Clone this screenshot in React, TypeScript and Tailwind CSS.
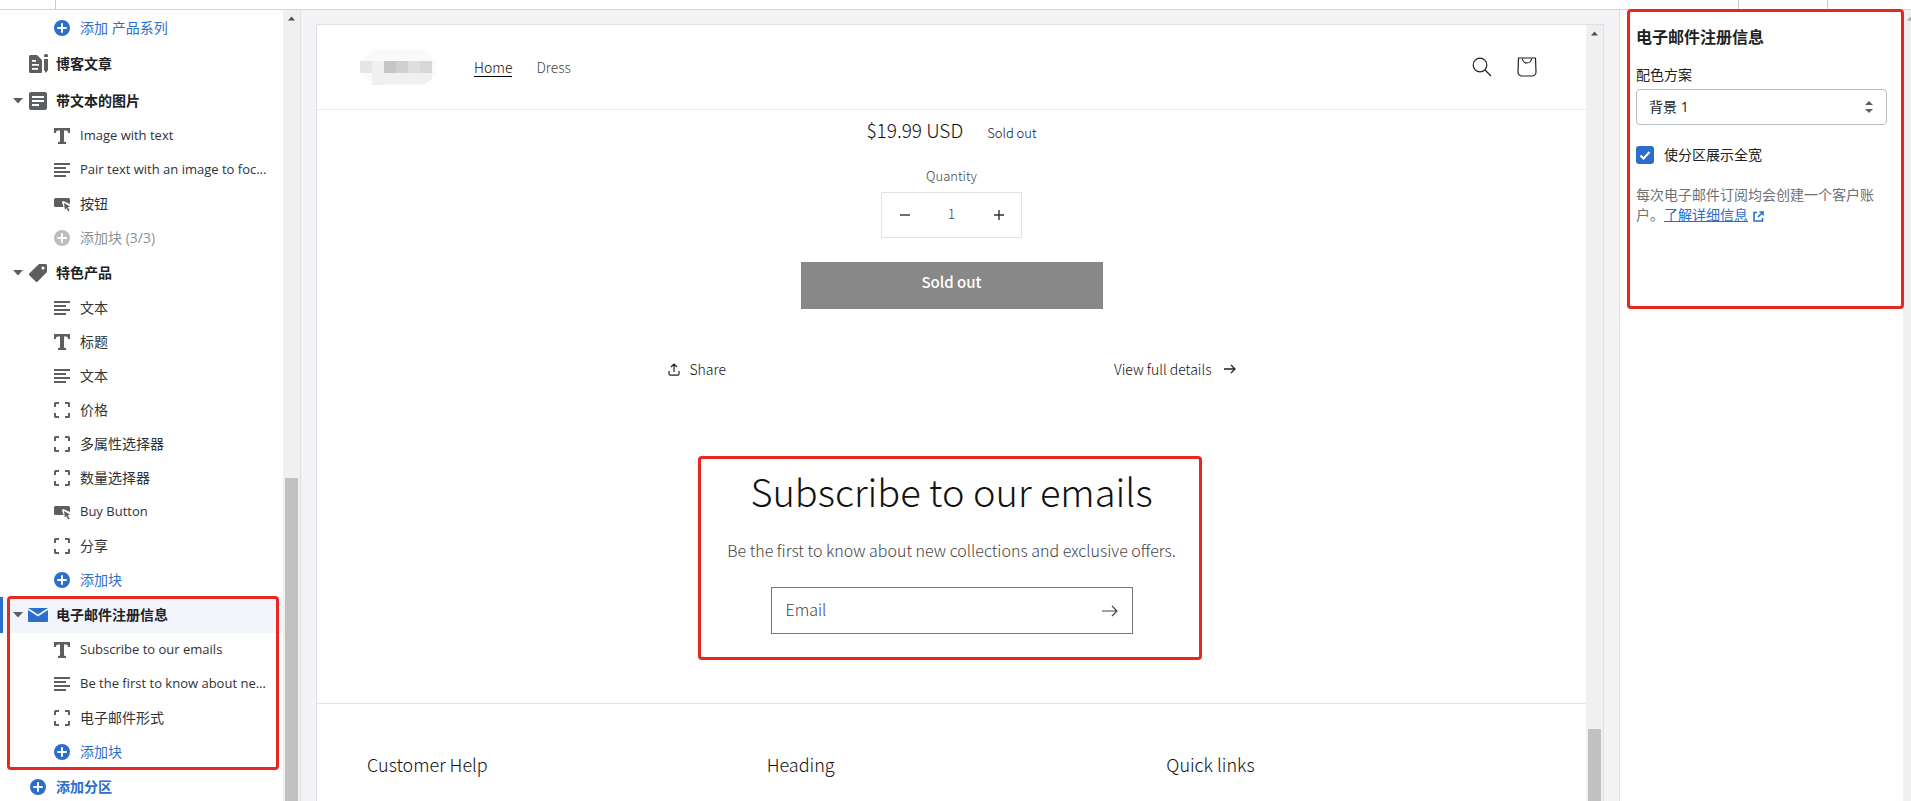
import React from 'react';

type IconName = 'heading' | 'text' | 'button' | 'block';

interface Block {
  icon: IconName;
  label: string;
  latin?: boolean;
}

const imageBlocks: Block[] = [
  { icon: 'heading', label: 'Image with text', latin: true },
  { icon: 'text', label: 'Pair text with an image to foc...', latin: true },
  { icon: 'button', label: '按钮' },
];

const productBlocks: Block[] = [
  { icon: 'text', label: '文本' },
  { icon: 'heading', label: '标题' },
  { icon: 'text', label: '文本' },
  { icon: 'block', label: '价格' },
  { icon: 'block', label: '多属性选择器' },
  { icon: 'block', label: '数量选择器' },
  { icon: 'button', label: 'Buy Button', latin: true },
  { icon: 'block', label: '分享' },
];

const emailBlocks: Block[] = [
  { icon: 'heading', label: 'Subscribe to our emails', latin: true },
  { icon: 'text', label: 'Be the first to know about ne...', latin: true },
  { icon: 'block', label: '电子邮件形式' },
];

const BlockIcon = ({ name }: { name: IconName }) => (
  <svg viewBox="0 0 16 16" className="size-4 shrink-0 fill-[#5c5f62]" aria-hidden="true">
    {name === 'heading' && <path d="M0 0h16v5h-2c0-1.800-.7-2.500-2.200-2.500H10V12.500c0 1 .5 1.500 2 1.500v2H4v-2c1.500 0 2-.5 2-1.500V2.500H4.200C2.700 2.500 2 3.200 2 5H0z" />}
    {name === 'text' && <path d="M0 1h16v2H0zM0 5h12v2H0zM0 9h16v2H0zM0 13h12v2H0z" />}
    {name === 'button' && (
      <path d="M1.500 2h13A1.500 1.500 0 0 1 16 3.500V8L9.800 5.200a1.200 1.200 0 0 0-1.600 1.500L9.600 11H1.500A1.500 1.500 0 0 1 0 9.500v-6A1.500 1.500 0 0 1 1.500 2zM10 7l6 3.600-2.300.7 2 3.300-1.400.9-2-3.400-1.500 1.700z" />
    )}
    {name === 'block' && (
      <path d="M1.500 0H5v2H2v3H0V1.500A1.500 1.500 0 0 1 1.500 0zM11 0h3.500A1.500 1.500 0 0 1 16 1.500V5h-2V2h-3zM0 11h2v3h3v2H1.500A1.500 1.500 0 0 1 0 14.500zM14 11h2v3.500a1.500 1.500 0 0 1-1.500 1.500H11v-2h3z" />
    )}
  </svg>
);

const PlusIcon = ({ className }: { className: string }) => (
  <svg viewBox="0 0 16 16" className={className} aria-hidden="true">
    <circle cx="8" cy="8" r="8" fill="currentColor" />
    <path d="M8 4v8M4 8h8" stroke="#fff" strokeWidth="2" strokeLinecap="round" />
  </svg>
);

const BlockRow = ({ block }: { block: Block }) => (
  <button className="flex h-[34px] w-full items-center gap-2.5 pl-[54px] text-left text-[#303336]">
    <BlockIcon name={block.icon} />
    <span className={block.latin ? 'whitespace-nowrap text-[13px]' : 'whitespace-nowrap text-sm'}>{block.label}</span>
  </button>
);

const AddRow = ({ label, disabled = false }: { label: string; disabled?: boolean }) => (
  <button
    disabled={disabled}
    className="flex h-[34px] w-full items-center gap-2.5 pl-[54px] text-left text-sm text-[#2c6ecb] disabled:text-[#8c9196]"
  >
    <PlusIcon className={disabled ? 'size-4 text-[#babec3]' : 'size-4 text-[#2c6ecb]'} />
    {label}
  </button>
);

const SectionRow = ({ label, children }: { label: string; children: React.ReactNode }) => (
  <button className="flex h-9 w-full items-center pl-[13px] text-left text-sm font-bold text-[#202223]">
    <svg viewBox="0 0 10 6" className="mr-1.5 h-1.5 w-2.5 fill-[#5c5f62]" aria-hidden="true">
      <path d="M0 0h10L5 5.500z" />
    </svg>
    {children}
    <span className="ml-[9px]">{label}</span>
  </button>
);

const Scrollbar = ({ thumb }: { thumb: string }) => (
  <div className="flex w-[17px] shrink-0 flex-col items-center bg-[#f0f0f0]" aria-hidden="true">
    <svg viewBox="0 0 17 17" className="size-[17px] shrink-0 fill-[#505050]">
      <path d="M5 10.500h7L8.500 6.500z" />
    </svg>
    <div className={thumb} />
  </div>
);

const Sidebar = () => (
  <aside className="flex w-[301px] shrink-0 border-r border-[#dfe0e2] bg-white">
    <nav className="min-w-0 flex-1 overflow-hidden pt-px">
      <AddRow label="添加 产品系列" />
      <button className="flex h-[38px] w-full items-center pl-[29px] text-left text-sm font-bold text-[#202223]">
        <svg viewBox="0 0 20 20" className="size-5 fill-[#5c5f62]" aria-hidden="true">
          <path d="M1.500 1H8l5 5v12a1 1 0 0 1-1 1H1.500A1.500 1.500 0 0 1 0 17.500v-15A1.500 1.500 0 0 1 1.500 1zM3 6v1.700h4V6zM3 10v1.700h7V10zM3 14v1.700h6V14z" fillRule="evenodd" />
          <path d="M15 3V1.500A1.500 1.500 0 0 1 16.500 0h1A1.500 1.500 0 0 1 19 1.500V3zM15 5h4v11l-2 3-2-3z" />
        </svg>
        <span className="ml-[7px]">博客文章</span>
      </button>

      <SectionRow label="带文本的图片">
        <svg viewBox="0 0 18 18" className="size-[18px]" aria-hidden="true">
          <rect width="18" height="18" rx="2" fill="#5c5f62" />
          <path d="M3 5h12M3 9h12M3 13h7" stroke="#fff" strokeWidth="1.800" />
        </svg>
      </SectionRow>
      {imageBlocks.map((block) => (
        <BlockRow key={block.label} block={block} />
      ))}
      <AddRow label="添加块 (3/3)" disabled />

      <SectionRow label="特色产品">
        <svg viewBox="0 0 18 18" className="size-[18px] fill-[#5c5f62]" aria-hidden="true">
          <path d="M10 0h6.500A1.500 1.500 0 0 1 18 1.500V8l-9.300 9.500a1.500 1.500 0 0 1-2.100 0L.5 11.400a1.500 1.500 0 0 1 0-2.100zM14 2.500a1.500 1.500 0 1 0 0 3 1.500 1.500 0 0 0 0-3z" fillRule="evenodd" />
        </svg>
      </SectionRow>
      {productBlocks.map((block, i) => (
        <BlockRow key={i} block={block} />
      ))}
      <AddRow label="添加块" />

      <div className="relative">
        <div className="border-l-[3px] border-[#2c6ecb] bg-[#f2f5fc]">
          <div className="-ml-[3px]">
            <SectionRow label="电子邮件注册信息">
              <svg viewBox="0 0 20 14" className="-mx-px h-3.5 w-5" aria-hidden="true">
                <rect width="20" height="14" rx="1" fill="#2c6ecb" />
                <path d="M0 1l10 6.500L20 1" stroke="#f2f5fc" strokeWidth="1.800" fill="none" />
              </svg>
            </SectionRow>
          </div>
        </div>
        {emailBlocks.map((block) => (
          <BlockRow key={block.label} block={block} />
        ))}
        <AddRow label="添加块" />
        <div className="pointer-events-none absolute -inset-y-px left-[7px] right-1 rounded-sm border-3 border-[#e8281e]" />
      </div>

      <button className="flex h-9 w-full items-center gap-2.5 pl-[30px] text-left text-sm font-bold text-[#2c6ecb]">
        <PlusIcon className="size-4" />
        添加分区
      </button>
    </nav>
    <Scrollbar thumb="mt-[451px] w-[13px] flex-1 bg-[#c1c1c1]" />
  </aside>
);

const StoreHeader = () => (
  <header className="flex h-[85px] shrink-0 items-center border-b border-[#ebebeb] pl-[43px] pr-[49px]">
    <svg viewBox="0 0 76 36" className="h-9 w-[76px]" shapeRendering="crispEdges" aria-hidden="true">
      <path d="M0 12L12 0h54l10 14v12L64 36H12L0 24z" fill="#fafafa" />
      <path d="M0 12h12v12H0z" fill="#e5e5e5" />
      <path d="M12 12h12v24H12z" fill="#f0f0f0" />
      <path d="M24 12h12v12H24z" fill="#c6c6c6" />
      <path d="M36 12h12v12H36z" fill="#d0d0d0" />
      <path d="M48 12h12v12H48z" fill="#dedede" />
      <path d="M60 12h12v12H60z" fill="#d8d7d6" />
      <path d="M24 24h48v6l-8 5H24z" fill="#f0f0f0" />
    </svg>
    <nav className="ml-[38px] flex gap-6 text-sm text-[#444]">
      <a href="#home" className="border-b border-black leading-[18px] text-[#111]">Home</a>
      <a href="#dress" className="leading-[18px]">Dress</a>
    </nav>
    <div className="ml-auto flex gap-[25px]">
      <button aria-label="Search">
        <svg viewBox="0 0 20 20" className="size-5 fill-none stroke-[#222] stroke-[1.2]">
          <circle cx="8" cy="8" r="6.800" />
          <path d="M13 13l6 6" />
        </svg>
      </button>
      <button aria-label="Cart">
        <svg viewBox="0 0 20 20" className="size-5 fill-none stroke-[#222] stroke-[1.2]">
          <path d="M1.500 1h17l.5 14a4 4 0 0 1-4 4H5a4 4 0 0 1-4-4z" />
          <path d="M5.500 1.500a4.500 4.500 0 0 0 9 0" />
        </svg>
      </button>
    </div>
  </header>
);

const Preview = () => (
  <div className="mt-3.5 mx-[15px] flex min-w-0 flex-1 border-x border-t border-[#dfe0e2] bg-white font-['Noto_Sans_CJK_SC',sans-serif] font-light">
    <div className="flex min-w-0 flex-1 flex-col overflow-hidden">
      <StoreHeader />
      <main className="flex flex-col items-center">
        <div className="mt-2 flex h-6 items-baseline gap-6 text-[#111]">
          <span className="text-[19px] leading-6">$19.99 USD</span>
          <span className="text-[13px]">Sold out</span>
        </div>
        <label htmlFor="quantity" className="mt-6 text-[13px] leading-5 text-[#444]">Quantity</label>
        <div className="mt-[6px] flex h-[46px] w-[141px] items-center border border-[#e2e2e2]">
          <button aria-label="Decrease quantity" className="flex h-full w-[45px] items-center justify-center">
            <svg viewBox="0 0 10 10" className="size-2.5 stroke-[#333] stroke-[1.4]">
              <path d="M0 5h10" />
            </svg>
          </button>
          <input id="quantity" defaultValue="1" className="w-0 flex-1 pb-1 text-center text-sm text-[#444] outline-none" />
          <button aria-label="Increase quantity" className="flex h-full w-[45px] items-center justify-center">
            <svg viewBox="0 0 10 10" className="size-2.5 stroke-[#333] stroke-[1.4]">
              <path d="M0 5h10M5 0v10" />
            </svg>
          </button>
        </div>
        <button disabled className="mt-6 h-[47px] w-[302px] bg-[#888] pb-1.5 text-[15px] font-medium text-white">Sold out</button>

        <div className="mt-[50px] flex w-[568px] items-center justify-between text-sm leading-5 text-[#111]">
          <button className="flex items-center gap-2.5">
            <svg viewBox="0 0 12 13" className="h-[13px] w-3 fill-none stroke-[#222] stroke-[1.2]" aria-hidden="true">
              <path d="M6 9V1M3 4l3-3 3 3M1 8v3a1.200 1.200 0 0 0 1.200 1.200h7.600A1.200 1.200 0 0 0 11 11V8" />
            </svg>
            Share
          </button>
          <a href="#details" className="flex items-center gap-3">
            View full details
            <svg viewBox="0 0 12 10" className="h-2.5 w-3 fill-none stroke-[#222] stroke-[1.3]" aria-hidden="true">
              <path d="M0 5h11M7 1l4 4-4 4" />
            </svg>
          </a>
        </div>

        <section className="relative mt-[77px] flex h-[204px] w-[504px] flex-col items-center">
          <h2 className="mt-3 text-[38px] leading-[46px] text-[#121212]">Subscribe to our emails</h2>
          <p className="mt-6 text-base leading-6 text-[#444]">
            Be the first to know about new collections and exclusive offers.
          </p>
          <form className="mt-[25px] flex h-[47px] w-[362px] items-center border border-[#777] px-3.5" onSubmit={(e) => e.preventDefault()}>
            <input type="email" aria-label="Email" placeholder="Email" className="min-w-0 flex-1 pb-1 text-base outline-none placeholder:text-[#444]" />
            <button aria-label="Subscribe">
              <svg viewBox="0 0 16 12" className="h-3 w-4 fill-none stroke-[#444] stroke-[1.2]">
                <path d="M0 6h15M10 1l5 5-5 5" />
              </svg>
            </button>
          </form>
          <div className="pointer-events-none absolute inset-y-0 -left-0.5 right-0.5 rounded-sm border-3 border-[#e8281e]" />
        </section>
      </main>
      <footer className="mt-[43px] grid grid-cols-3 border-t border-[#e5e5e5] pl-[50px] pr-5 pt-12 text-lg leading-6 text-[#111]">
        <h2>Customer Help</h2>
        <h2>Heading</h2>
        <h2>Quick links</h2>
      </footer>
    </div>
    <Scrollbar thumb="mt-[687px] w-[13px] flex-1 bg-[#c1c1c1]" />
  </div>
);

const SettingsPanel = () => (
  <aside className="flex w-[292px] shrink-0 border-l border-[#dfe0e2] bg-white">
    <div className="relative min-w-0 flex-1 px-4 pt-[15px]">
      <h2 className="text-base leading-6 font-bold text-[#202223]">电子邮件注册信息</h2>
      <label htmlFor="scheme" className="mt-4 block text-sm leading-5 text-[#202223]">配色方案</label>
      <div className="relative mt-1">
        <select id="scheme" className="h-9 w-full appearance-none rounded-sm border border-[#babfc3] bg-white px-3 text-sm text-[#202223]">
          <option>背景 1</option>
        </select>
        <svg viewBox="0 0 8 12" className="pointer-events-none absolute right-3.5 top-3 h-3 w-2 fill-[#5c5f62]" aria-hidden="true">
          <path d="M0 4h8L4 0zM0 8h8l-4 4z" />
        </svg>
      </div>
      <label className="mt-5 flex items-center gap-2.5 text-sm leading-5 text-[#202223]">
        <span className="relative flex size-[18px]">
          <input type="checkbox" defaultChecked className="size-[18px] appearance-none rounded-[3px] border-2 border-[#8c9196] checked:border-[#2c6ecb] checked:bg-[#2c6ecb]" />
          <svg viewBox="0 0 18 18" className="pointer-events-none absolute inset-0 fill-none stroke-white stroke-2" aria-hidden="true">
            <path d="M4.500 9.500l3 3 6-6.500" />
          </svg>
        </span>
        使分区展示全宽
      </label>
      <p className="mt-5 text-sm leading-5 text-[#6d7175]">
        每次电子邮件订阅均会创建一个客户账户。
        <a href="#learn-more" className="text-[#2c6ecb]">
          <span className="underline">了解详细信息</span>
          <svg viewBox="0 0 11 11" className="ml-[5px] inline size-[11px] fill-none stroke-[#2c6ecb] stroke-[1.6]" aria-hidden="true">
            <path d="M4 1.500H1v8.500h8.500V7M6.500 1H10v3.500M10 1L5 6" />
          </svg>
        </a>
      </p>
      <div className="pointer-events-none absolute -right-px -top-px left-[7px] h-[300px] rounded-sm border-3 border-[#e8281e]" />
    </div>
    <div className="w-2 shrink-0 bg-[#f0f0f0]" aria-hidden="true">
      <svg viewBox="0 0 8 17" className="h-[17px] w-2 fill-[#a3a3a3]">
        <path d="M4 10.500h4v-4z" />
      </svg>
    </div>
  </aside>
);

const App: React.FC = () => {
  return (
    <div className="flex h-screen flex-col overflow-hidden bg-[#f4f4f6] font-['Open_Sans','Noto_Sans_CJK_SC',sans-serif]">
      <div className="flex h-2.5 shrink-0 border-b border-[#d5d6d8] bg-white">
        <div className="w-14 border-r border-[#c9cccf]" />
        <div className="ml-auto w-[90px] border-x border-[#c9cccf]" />
        <div className="w-[83px]" />
      </div>
      <div className="flex min-h-0 flex-1">
        <Sidebar />
        <Preview />
        <SettingsPanel />
      </div>
    </div>
  );
};

export default App;
